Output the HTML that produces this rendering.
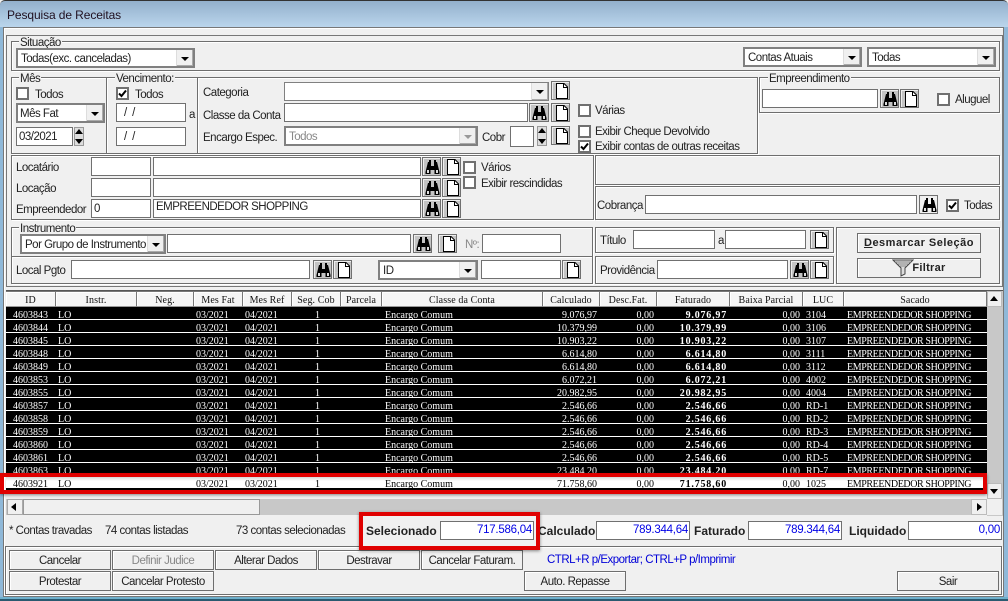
<!DOCTYPE html>
<html><head><meta charset="utf-8"><style>
html,body{margin:0;padding:0;background:#f0f0f0}
#w{position:relative;width:1008px;height:601px;overflow:hidden;background:#f0f0f0;font:11.5px "Liberation Sans",sans-serif;letter-spacing:-.5px;color:#222}
#w div,#w span,#w svg{position:absolute;box-sizing:border-box}
.t{white-space:nowrap;line-height:14px;margin-top:1px}
.g{border:1px solid #6e6e6e;box-shadow:inset 1px 1px #fff,1px 1px #fff}
.f{background:#fff;border:1px solid #707070;line-height:18px;padding-left:2px;white-space:nowrap}
.c{background:#fff;border:2px solid #808080;line-height:18px;padding-left:3px;white-space:nowrap}
.c i{position:absolute;right:0;top:0;bottom:0;width:16px;background:#f0f0f0;border-left:1px solid #ddd;box-shadow:inset -1px -1px #aaa}
.c i:after{content:"";position:absolute;left:4px;top:7px;border:4px solid transparent;border-top:4px solid #000;border-bottom:0}
.c.dis i:after{border-top-color:#999}
.x{width:13px;height:13px;background:#fff;border:2px solid #707070}
.x svg{left:0;top:0}
.b{width:19px;height:19px;background:#c4c4c4;border:1px solid #707070;box-shadow:inset 1px 1px #eee}
.b svg{left:2px;top:1px}
.s{width:10px;background:#ddd;border:1px solid #999}
.s:before,.s:after{content:"";position:absolute;left:0;border:4px solid transparent}
.s:before{top:1px;border-bottom:5px solid #000;border-top:0}
.s:after{bottom:1px;border-top:5px solid #000;border-bottom:0}
.l{background:#f0f0f0;line-height:10px;padding:0 1px;white-space:nowrap}
.p{width:102px;height:20px;background:#f0f0f0;border:1px solid #6e6e6e;text-align:center;line-height:20px;box-shadow:inset 1px 1px #fff}
.h{top:291px;height:16px;background:#f5f5f5;border-right:1px solid #777;border-bottom:1px solid #999;border-top:1px solid #777;box-shadow:inset 1px 1px #fff;text-align:center;font:10px/17px "Liberation Serif",serif;letter-spacing:.1px;color:#111}
.r{left:6px;width:981px;height:13px;background:#000;border-bottom:1px solid #fff;color:#fff;font:10px/13px "Liberation Serif",serif;letter-spacing:0}
.r span{top:2px;white-space:nowrap}
.a{right:939px}
.d{left:52px}.e{left:190px}.j{left:239px}.k{left:309px}.m{left:379px}
.n{right:390px}.o{right:333px}
.q{right:260px;font-weight:bold;letter-spacing:.8px}
.u{right:187px}.v{left:800px}.y{left:841px;letter-spacing:-.4px}
.fb{color:#0000e6;text-align:right;padding:0 1px 0 0;line-height:17px;font-size:11.5px;letter-spacing:-.25px}
.bd{font-weight:bold;font-size:12px;letter-spacing:0}
</style></head><body><div id="w">
<svg width="0" height="0" style="left:0;top:0"><defs>
<symbol id="dc" viewBox="0 0 15 17"><path d="M2.5 .5H10L13.5 4V15.5H2.5Z" fill="#fff" stroke="#000"/><path d="M9.5 .5V4.5H13.5" fill="none" stroke="#000"/></symbol>
<symbol id="bn" viewBox="0 0 15 17"><path d="M3 3H6V7H9V3H12L14.500 13V15H9.500V11H5.500V15H.5V13Z" fill="#000"/><path d="M2 11H4V14H2ZM11 11H13V14H11Z" fill="#ddd"/><path d="M4 1H6V3H4ZM9 1H11V3H9Z" fill="#000"/></symbol>
<symbol id="ck" viewBox="0 0 9 9"><path d="M1 4.500L3.500 7L8 1.500" fill="none" stroke="#000" stroke-width="2"/></symbol>
</defs></svg>

<div style="left:0;top:0;width:1008px;height:27px;background:linear-gradient(#93b0cc,#bad5ec);border-top:1px solid #333;border-radius:5px 5px 0 0"></div>
<div style="left:0;top:27px;width:3px;height:574px;background:#8fb8d8"></div>
<div style="left:1004px;top:27px;width:4px;height:574px;background:#8fb8d8"></div>
<div style="left:0;top:597px;width:1008px;height:4px;background:#6fb0cc"></div>
<div style="left:0;top:599px;width:1008px;height:2px;background:#2a5a70"></div>
<div class="t" style="left:7px;top:8px;margin-top:0;font-size:12px;letter-spacing:-.1px;color:#201020">Pesquisa de Receitas</div>
<div style="left:3px;top:27px;width:1001px;height:570px;border:1px solid #777;box-shadow:inset 1px 1px #fff"></div>
<div style="left:6px;top:35px;width:997px;height:252px;border:1px solid #777"></div>

<!-- Situacao -->
<div class="g" style="left:11px;top:41px;width:989px;height:30px"></div>
<div class="t l" style="left:19px;top:37px">Situação</div>
<div class="c" style="left:16px;top:48px;width:179px;height:20px">Todas(exc. canceladas)<i></i></div>
<div class="c" style="left:743px;top:47px;width:119px;height:20px">Contas Atuais<i></i></div>
<div class="c" style="left:867px;top:47px;width:129px;height:20px">Todas<i></i></div>

<!-- Mes -->
<div class="g" style="left:11px;top:77px;width:96px;height:77px"></div>
<div class="t l" style="left:19px;top:73px">Mês</div>
<div class="x" style="left:16px;top:87px"></div>
<div class="t" style="left:35px;top:87px">Todos</div>
<div class="c" style="left:16px;top:103px;width:89px;height:20px;padding-left:2px">Mês Fat<i></i></div>
<div class="f" style="left:16px;top:127px;width:57px;height:19px">03/2021</div>
<div class="s" style="left:74px;top:127px;height:19px"></div>

<!-- Vencimento -->
<div class="g" style="left:106px;top:77px;width:92px;height:77px"></div>
<div class="t l" style="left:115px;top:73px">Vencimento:</div>
<div class="x" style="left:116px;top:87px"><svg width="9" height="9"><use href="#ck"/></svg></div>
<div class="t" style="left:135px;top:87px">Todos</div>
<div class="f" style="left:116px;top:103px;width:70px;height:19px;padding-left:7px">/ &nbsp;/</div>
<div class="t" style="left:189px;top:107px">a</div>
<div class="f" style="left:116px;top:127px;width:70px;height:19px;padding-left:7px">/ &nbsp;/</div>

<!-- Categoria -->
<div class="g" style="left:197px;top:77px;width:561px;height:77px"></div>
<div class="t" style="left:203px;top:85px">Categoria</div>
<div class="c" style="left:284px;top:82px;width:265px;height:19px;border-width:1px"><i></i></div>
<div class="b" style="left:551px;top:81px"><svg width="15" height="17"><use href="#dc"/></svg></div>
<div class="t" style="left:203px;top:108px">Classe da Conta</div>
<div class="f" style="left:284px;top:103px;width:244px;height:19px"></div>
<div class="b" style="left:529px;top:103px;width:20px"><svg width="15" height="17"><use href="#bn"/></svg></div>
<div class="b" style="left:551px;top:103px"><svg width="15" height="17"><use href="#dc"/></svg></div>
<div class="t" style="left:203px;top:130px">Encargo Espec.</div>
<div class="c dis" style="left:284px;top:126px;width:194px;height:20px;color:#888">Todos<i></i></div>
<div class="t" style="left:482px;top:130px">Cobr</div>
<div class="f" style="left:510px;top:126px;width:24px;height:21px"></div>
<div class="s" style="left:537px;top:126px;height:20px"></div>
<div class="b" style="left:551px;top:126px"><svg width="15" height="17"><use href="#dc"/></svg></div>
<div class="x" style="left:578px;top:104px"></div>
<div class="t" style="left:595px;top:103px">Várias</div>
<div class="x" style="left:578px;top:125px"></div>
<div class="t" style="left:595px;top:124px">Exibir Cheque Devolvido</div>
<div class="x" style="left:578px;top:140px"><svg width="9" height="9"><use href="#ck"/></svg></div>
<div class="t" style="left:595px;top:139px">Exibir contas de outras receitas</div>

<!-- Empreendimento -->
<div class="g" style="left:759px;top:77px;width:241px;height:36px"></div>
<div class="t l" style="left:768px;top:73px">Empreendimento</div>
<div class="f" style="left:762px;top:89px;width:116px;height:19px"></div>
<div class="b" style="left:880px;top:89px"><svg width="15" height="17"><use href="#bn"/></svg></div>
<div class="b" style="left:900px;top:89px"><svg width="15" height="17"><use href="#dc"/></svg></div>
<div class="x" style="left:937px;top:93px"></div>
<div class="t" style="left:955px;top:92px">Aluguel</div>

<!-- Locatario -->
<div class="g" style="left:11px;top:155px;width:583px;height:65px"></div>
<div class="t" style="left:16px;top:160px">Locatário</div>
<div class="f" style="left:91px;top:157px;width:60px;height:19px"></div>
<div class="f" style="left:153px;top:157px;width:268px;height:19px"></div>
<div class="b" style="left:422px;top:157px"><svg width="15" height="17"><use href="#bn"/></svg></div>
<div class="b" style="left:442px;top:157px"><svg width="15" height="17"><use href="#dc"/></svg></div>
<div class="t" style="left:16px;top:181px">Locação</div>
<div class="f" style="left:91px;top:178px;width:60px;height:19px"></div>
<div class="f" style="left:153px;top:178px;width:268px;height:19px"></div>
<div class="b" style="left:422px;top:178px"><svg width="15" height="17"><use href="#bn"/></svg></div>
<div class="b" style="left:442px;top:178px"><svg width="15" height="17"><use href="#dc"/></svg></div>
<div class="t" style="left:16px;top:202px">Empreendedor</div>
<div class="f" style="left:91px;top:199px;width:60px;height:19px">0</div>
<div class="f" style="left:153px;top:199px;width:268px;height:19px;line-height:15px">EMPREENDEDOR SHOPPING</div>
<div class="b" style="left:422px;top:199px"><svg width="15" height="17"><use href="#bn"/></svg></div>
<div class="b" style="left:442px;top:199px"><svg width="15" height="17"><use href="#dc"/></svg></div>
<div class="x" style="left:463px;top:161px"></div>
<div class="t" style="left:481px;top:160px">Vários</div>
<div class="x" style="left:463px;top:176px"></div>
<div class="t" style="left:481px;top:176px">Exibir rescindidas</div>

<div class="g" style="left:595px;top:155px;width:405px;height:30px"></div>
<div class="g" style="left:595px;top:186px;width:405px;height:34px"></div>
<div class="t" style="left:597px;top:198px">Cobrança</div>
<div class="f" style="left:645px;top:195px;width:272px;height:19px"></div>
<div class="b" style="left:919px;top:195px;background:#f0f0f0"><svg width="15" height="17"><use href="#bn"/></svg></div>
<div class="x" style="left:946px;top:199px"><svg width="9" height="9"><use href="#ck"/></svg></div>
<div class="t" style="left:964px;top:198px">Todas</div>

<!-- Instrumento -->
<div class="g" style="left:11px;top:227px;width:582px;height:30px"></div>
<div class="t l" style="left:19px;top:223px">Instrumento</div>
<div class="c" style="left:20px;top:234px;width:146px;height:20px">Por Grupo de Instrumento<i></i></div>
<div class="f" style="left:167px;top:234px;width:244px;height:19px"></div>
<div class="b" style="left:413px;top:234px"><svg width="15" height="17"><use href="#bn"/></svg></div>
<div class="b" style="left:438px;top:234px"><svg width="15" height="17"><use href="#dc"/></svg></div>
<div class="t" style="left:465px;top:237px;color:#888">Nº:</div>
<div class="f" style="left:482px;top:234px;width:79px;height:19px"></div>

<div class="g" style="left:11px;top:256px;width:582px;height:28px"></div>
<div class="t" style="left:16px;top:263px">Local Pgto</div>
<div class="f" style="left:71px;top:260px;width:239px;height:19px"></div>
<div class="b" style="left:313px;top:260px"><svg width="15" height="17"><use href="#bn"/></svg></div>
<div class="b" style="left:333px;top:260px"><svg width="15" height="17"><use href="#dc"/></svg></div>
<div class="c" style="left:378px;top:260px;width:100px;height:20px">ID<i></i></div>
<div class="f" style="left:481px;top:260px;width:80px;height:19px"></div>
<div class="b" style="left:562px;top:260px"><svg width="15" height="17"><use href="#dc"/></svg></div>

<!-- Titulo -->
<div class="g" style="left:595px;top:227px;width:239px;height:26px"></div>
<div class="t" style="left:600px;top:233px">Título</div>
<div class="f" style="left:633px;top:230px;width:82px;height:19px"></div>
<div class="t" style="left:718px;top:233px">a</div>
<div class="f" style="left:725px;top:230px;width:81px;height:19px"></div>
<div class="b" style="left:810px;top:230px"><svg width="15" height="17"><use href="#dc"/></svg></div>
<div class="g" style="left:595px;top:256px;width:239px;height:28px"></div>
<div class="t" style="left:600px;top:263px">Providência</div>
<div class="f" style="left:657px;top:260px;width:131px;height:19px"></div>
<div class="b" style="left:790px;top:260px"><svg width="15" height="17"><use href="#bn"/></svg></div>
<div class="b" style="left:810px;top:260px"><svg width="15" height="17"><use href="#dc"/></svg></div>

<div class="g" style="left:836px;top:227px;width:164px;height:57px"></div>
<div class="p" style="left:857px;top:233px;width:124px;font-size:11px;font-weight:bold;letter-spacing:.5px;line-height:18px"><u>D</u>esmarcar Seleção</div>
<div class="p" style="left:857px;top:258px;width:124px;height:20px;font-size:11px;font-weight:bold;letter-spacing:.3px;padding-left:20px;line-height:18px">Filtrar</div>
<svg width="22" height="18" style="left:892px;top:259px"><path d="M1 1H21L13 9V15L9 17V9Z" fill="#ddd" stroke="#444"/><path d="M3 3H19M6 5H16M8 7H14" stroke="#888"/></svg>

<!-- Grid -->
<div style="left:6px;top:290px;width:997px;height:226px;background:#f0f0f0;border-top:1px solid #555"></div>
<div class="h" style="left:6px;width:50px">ID</div>
<div class="h" style="left:56px;width:81px">Instr.</div>
<div class="h" style="left:137px;width:57px">Neg.</div>
<div class="h" style="left:194px;width:49px">Mes Fat</div>
<div class="h" style="left:243px;width:49px">Mes Ref</div>
<div class="h" style="left:292px;width:49px">Seg. Cob</div>
<div class="h" style="left:341px;width:41px">Parcela</div>
<div class="h" style="left:382px;width:161px">Classe da Conta</div>
<div class="h" style="left:543px;width:57px">Calculado</div>
<div class="h" style="left:600px;width:57px">Desc.Fat.</div>
<div class="h" style="left:657px;width:73px">Faturado</div>
<div class="h" style="left:730px;width:73px">Baixa Parcial</div>
<div class="h" style="left:803px;width:41px">LUC</div>
<div class="h" style="left:844px;width:143px">Sacado</div>

<div class="r" style="top:307px"><span class="a">4603843</span><span class="d">LO</span><span class="e">03/2021</span><span class="j">04/2021</span><span class="k">1</span><span class="m">Encargo Comum</span><span class="n">9.076,97</span><span class="o">0,00</span><span class="q">9.076,97</span><span class="u">0,00</span><span class="v">3104</span><span class="y">EMPREENDEDOR SHOPPING</span></div>
<div class="r" style="top:320px"><span class="a">4603844</span><span class="d">LO</span><span class="e">03/2021</span><span class="j">04/2021</span><span class="k">1</span><span class="m">Encargo Comum</span><span class="n">10.379,99</span><span class="o">0,00</span><span class="q">10.379,99</span><span class="u">0,00</span><span class="v">3106</span><span class="y">EMPREENDEDOR SHOPPING</span></div>
<div class="r" style="top:333px"><span class="a">4603845</span><span class="d">LO</span><span class="e">03/2021</span><span class="j">04/2021</span><span class="k">1</span><span class="m">Encargo Comum</span><span class="n">10.903,22</span><span class="o">0,00</span><span class="q">10.903,22</span><span class="u">0,00</span><span class="v">3107</span><span class="y">EMPREENDEDOR SHOPPING</span></div>
<div class="r" style="top:346px"><span class="a">4603848</span><span class="d">LO</span><span class="e">03/2021</span><span class="j">04/2021</span><span class="k">1</span><span class="m">Encargo Comum</span><span class="n">6.614,80</span><span class="o">0,00</span><span class="q">6.614,80</span><span class="u">0,00</span><span class="v">3111</span><span class="y">EMPREENDEDOR SHOPPING</span></div>
<div class="r" style="top:359px"><span class="a">4603849</span><span class="d">LO</span><span class="e">03/2021</span><span class="j">04/2021</span><span class="k">1</span><span class="m">Encargo Comum</span><span class="n">6.614,80</span><span class="o">0,00</span><span class="q">6.614,80</span><span class="u">0,00</span><span class="v">3112</span><span class="y">EMPREENDEDOR SHOPPING</span></div>
<div class="r" style="top:372px"><span class="a">4603853</span><span class="d">LO</span><span class="e">03/2021</span><span class="j">04/2021</span><span class="k">1</span><span class="m">Encargo Comum</span><span class="n">6.072,21</span><span class="o">0,00</span><span class="q">6.072,21</span><span class="u">0,00</span><span class="v">4002</span><span class="y">EMPREENDEDOR SHOPPING</span></div>
<div class="r" style="top:385px"><span class="a">4603855</span><span class="d">LO</span><span class="e">03/2021</span><span class="j">04/2021</span><span class="k">1</span><span class="m">Encargo Comum</span><span class="n">20.982,95</span><span class="o">0,00</span><span class="q">20.982,95</span><span class="u">0,00</span><span class="v">4004</span><span class="y">EMPREENDEDOR SHOPPING</span></div>
<div class="r" style="top:398px"><span class="a">4603857</span><span class="d">LO</span><span class="e">03/2021</span><span class="j">04/2021</span><span class="k">1</span><span class="m">Encargo Comum</span><span class="n">2.546,66</span><span class="o">0,00</span><span class="q">2.546,66</span><span class="u">0,00</span><span class="v">RD-1</span><span class="y">EMPREENDEDOR SHOPPING</span></div>
<div class="r" style="top:411px"><span class="a">4603858</span><span class="d">LO</span><span class="e">03/2021</span><span class="j">04/2021</span><span class="k">1</span><span class="m">Encargo Comum</span><span class="n">2.546,66</span><span class="o">0,00</span><span class="q">2.546,66</span><span class="u">0,00</span><span class="v">RD-2</span><span class="y">EMPREENDEDOR SHOPPING</span></div>
<div class="r" style="top:424px"><span class="a">4603859</span><span class="d">LO</span><span class="e">03/2021</span><span class="j">04/2021</span><span class="k">1</span><span class="m">Encargo Comum</span><span class="n">2.546,66</span><span class="o">0,00</span><span class="q">2.546,66</span><span class="u">0,00</span><span class="v">RD-3</span><span class="y">EMPREENDEDOR SHOPPING</span></div>
<div class="r" style="top:437px"><span class="a">4603860</span><span class="d">LO</span><span class="e">03/2021</span><span class="j">04/2021</span><span class="k">1</span><span class="m">Encargo Comum</span><span class="n">2.546,66</span><span class="o">0,00</span><span class="q">2.546,66</span><span class="u">0,00</span><span class="v">RD-4</span><span class="y">EMPREENDEDOR SHOPPING</span></div>
<div class="r" style="top:450px"><span class="a">4603861</span><span class="d">LO</span><span class="e">03/2021</span><span class="j">04/2021</span><span class="k">1</span><span class="m">Encargo Comum</span><span class="n">2.546,66</span><span class="o">0,00</span><span class="q">2.546,66</span><span class="u">0,00</span><span class="v">RD-5</span><span class="y">EMPREENDEDOR SHOPPING</span></div>
<div class="r" style="top:463px"><span class="a">4603863</span><span class="d">LO</span><span class="e">03/2021</span><span class="j">04/2021</span><span class="k">1</span><span class="m">Encargo Comum</span><span class="n">23.484,20</span><span class="o">0,00</span><span class="q">23.484,20</span><span class="u">0,00</span><span class="v">RD-7</span><span class="y">EMPREENDEDOR SHOPPING</span></div>
<div class="r" style="top:476px;height:14px;background:linear-gradient(#ccc,#fff 5px);color:#000;border-bottom:2px solid #000"><span class="a">4603921</span><span class="d">LO</span><span class="e">03/2021</span><span class="j">03/2021</span><span class="k">1</span><span class="m">Encargo Comum</span><span class="n">71.758,60</span><span class="o">0,00</span><span class="q">71.758,60</span><span class="u">0,00</span><span class="v">1025</span><span class="y">EMPREENDEDOR SHOPPING</span></div>

<!-- V scrollbar -->
<div style="left:987px;top:291px;width:16px;height:225px;background:#c8c8c8"></div>
<div style="left:987px;top:291px;width:15px;height:16px;background:#f0f0f0;border:1px solid #bbb"></div>
<div style="left:990px;top:296px;border:4px solid transparent;border-bottom:5px solid #000;border-top:0;width:0;height:0"></div>
<div style="left:987px;top:483px;width:15px;height:16px;background:#f0f0f0;border:1px solid #bbb"></div>
<div style="left:990px;top:489px;border:4px solid transparent;border-top:5px solid #000;border-bottom:0;width:0;height:0"></div>
<!-- H scrollbar -->
<div style="left:6px;top:499px;width:981px;height:16px;background:#c8c8c8"></div>
<div style="left:7px;top:499px;width:16px;height:16px;background:#f0f0f0;border:1px solid #aaa"></div>
<div style="left:11px;top:503px;border:4px solid transparent;border-right:5px solid #000;border-left:0;width:0;height:0"></div>
<div style="left:23px;top:499px;width:237px;height:16px;background:#f0f0f0;border:1px solid #999"></div>
<div style="left:971px;top:499px;width:16px;height:16px;background:#f0f0f0;border:1px solid #bbb"></div>
<div style="left:977px;top:503px;border:4px solid transparent;border-left:5px solid #000;border-right:0;width:0;height:0"></div>
<div style="left:987px;top:499px;width:15px;height:16px;background:#f0f0f0"></div>

<!-- Status -->
<div class="t" style="left:9px;top:523px">* Contas travadas</div>
<div class="t" style="left:105px;top:523px">74 contas listadas</div>
<div class="t" style="left:236px;top:523px">73 contas selecionadas</div>
<div class="t bd" style="left:366px;top:523px">Selecionado</div>
<div class="f fb" style="left:440px;top:521px;width:94px;height:19px">717.586,04</div>
<div class="t bd" style="left:538px;top:523px">Calculado</div>
<div class="f fb" style="left:596px;top:521px;width:94px;height:19px">789.344,64</div>
<div class="t bd" style="left:694px;top:523px">Faturado</div>
<div class="f fb" style="left:748px;top:521px;width:94px;height:19px">789.344,64</div>
<div class="t bd" style="left:849px;top:523px">Liquidado</div>
<div class="f fb" style="left:908px;top:521px;width:94px;height:19px">0,00</div>

<!-- Bottom buttons -->
<div class="g" style="left:5px;top:546px;width:997px;height:49px"></div>
<div class="p" style="left:9px;top:550px">Cancelar</div>
<div class="p" style="left:112px;top:550px;color:#888">Definir Judice</div>
<div class="p" style="left:215px;top:550px">Alterar Dados</div>
<div class="p" style="left:318px;top:550px">Destravar</div>
<div class="p" style="left:421px;top:550px">Cancelar Faturam.</div>
<div class="p" style="left:9px;top:571px">Protestar</div>
<div class="p" style="left:112px;top:571px">Cancelar Protesto</div>
<div class="p" style="left:524px;top:571px">Auto. Repasse</div>
<div class="p" style="left:897px;top:571px">Sair</div>
<div class="t" style="left:547px;top:552px;color:#0000d8">CTRL+R p/Exportar; CTRL+P p/Imprimir</div>

<!-- Red annotations -->
<div style="left:0;top:473px;width:987px;height:21px;border:4px solid #e00000;box-shadow:0 1px 3px rgba(0,0,0,.45)"></div>
<div style="left:359px;top:512px;width:181px;height:38px;border:4px solid #e00000;box-shadow:0 1px 3px rgba(0,0,0,.45)"></div>
</div></body></html>
